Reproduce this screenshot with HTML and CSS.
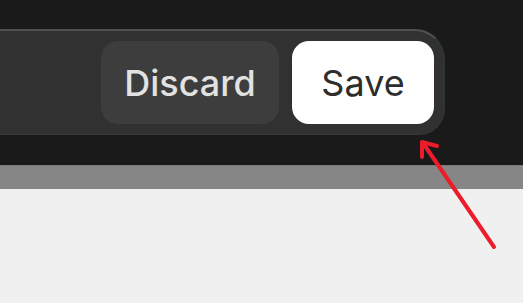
FILE: index.html
```html
<!DOCTYPE html>
<html>
<head>
<meta charset="utf-8">
<link rel="stylesheet" href="styles.css">
</head>
<body>
<div class="top">
  <div class="bar">
    <button class="btn discard">Discard</button>
    <button class="btn save">Save</button>
  </div>
</div>
<div class="band"></div>
<div class="content"></div>
<svg class="arrow" width="523" height="303" viewBox="0 0 523 303">
  <g stroke="#ec1c2a" stroke-width="4" stroke-linecap="round" stroke-linejoin="round" fill="none">
    <path d="M494 247 L423 143"/>
    <path d="M422 157 L422 142 L437 146"/>
  </g>
</svg>
</body>
</html>
```
FILE: styles.css
```css
html, body {
  margin: 0;
  padding: 0;
}
body {
  width: 523px;
  height: 303px;
  overflow: hidden;
  background: #f0f0f0;
  font-family: "Inter", "Liberation Sans", sans-serif;
  position: relative;
}
.top {
  background: #1a1a1a;
  height: 165px;
  padding-top: 29px;
  box-sizing: border-box;
}
.bar {
  width: 445px;
  height: 106px;
  box-sizing: border-box;
  background: #313131;
  border-top: 2px solid #4f4f4f;
  border-bottom: 1px solid #383838;
  border-right: 2px solid #2c3634;
  border-radius: 0 30px 26px 0;
  display: flex;
  align-items: center;
  justify-content: flex-end;
  gap: 13px;
  padding: 10px 9px 10px 0;
}
.btn {
  border: none;
  height: 83px;
  border-radius: 17px;
  font-family: "Inter", "Liberation Sans", sans-serif;
  font-size: 36px;
  padding: 0;
  display: flex;
  align-items: center;
  justify-content: center;
}
.discard {
  width: 178px;
  background: #3d3d3d;
  color: #e2e2e2;
  font-weight: 500;
}
.save {
  width: 142px;
  background: #ffffff;
  color: #2d2d2d;
  font-weight: 400;
}
.band {
  height: 24px;
  background: #868686;
  border-top: 1px solid #7a7a7a;
  box-sizing: border-box;
}
.content {
  height: 114px;
  background: #f0f0f0;
}
.arrow {
  position: absolute;
  left: 0;
  top: 0;
}
```
